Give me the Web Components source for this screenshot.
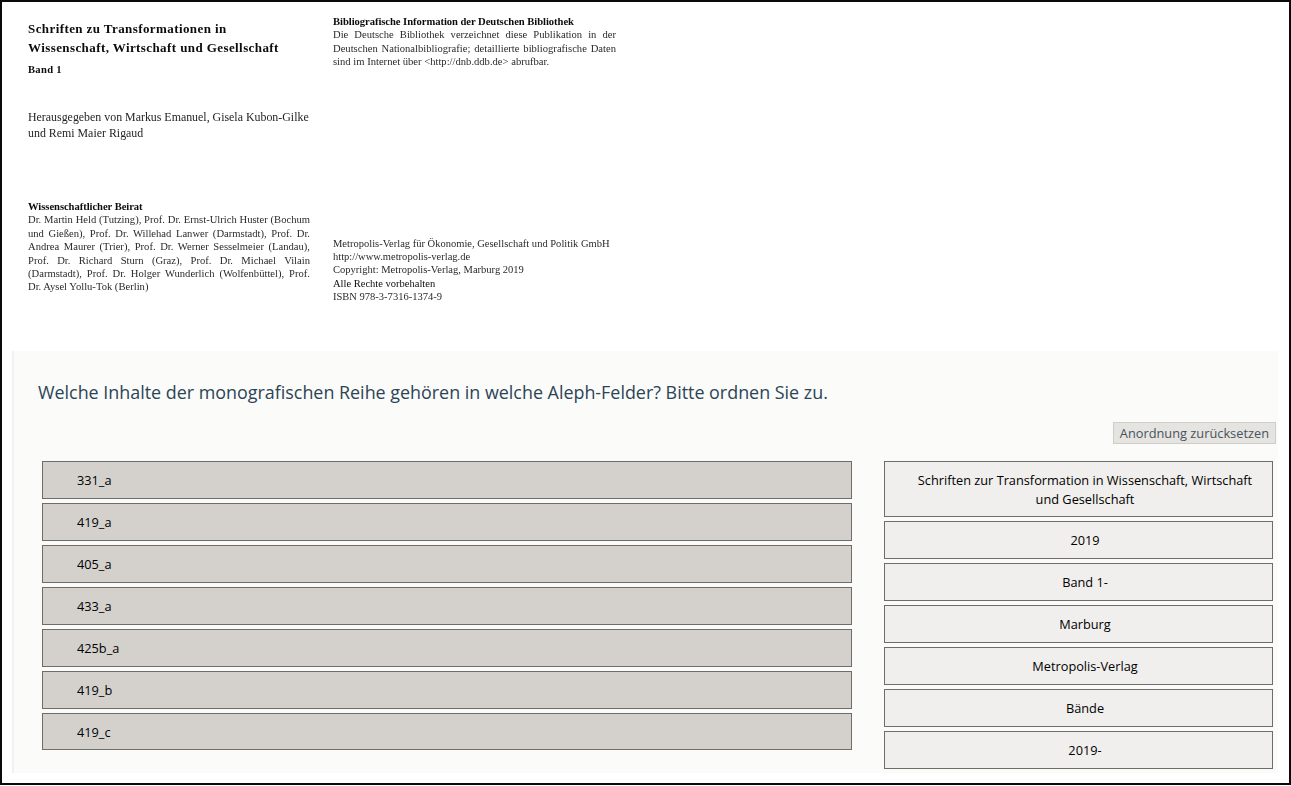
<!DOCTYPE html>
<html lang="de"><head><meta charset="utf-8"><title>Zuordnung</title>
<style>html,body{margin:0;background:#fff}</style></head>
<body>
<quiz-page></quiz-page>
<script>
function comp(name, css, html){
  customElements.define(name, class extends HTMLElement{
    constructor(){super();const s=this.attachShadow({mode:'open'});s.innerHTML='<style>'+css+'</style>'+html;}
  });
}
comp('doc-sheet',`
  :host{display:grid;grid-template-columns:282px 283px;column-gap:23px;padding:0 0 0 26px;height:349px;box-sizing:border-box;
    font-family:"Liberation Serif",serif;font-size:10.6px;line-height:13.4px;color:#2c2a28;filter:blur(.4px)}
  .col{display:flex;flex-direction:column}
  b{color:#0c0c0c;letter-spacing:-.05px}
  .h{font-weight:bold;font-size:13px;line-height:18.5px;color:#0c0c0c;letter-spacing:.41px;margin-top:18px}
  .band{font-weight:bold;font-size:10.6px;color:#0c0c0c;letter-spacing:.3px;margin-top:6px;line-height:14px}
  .ed{font-size:11.9px;line-height:15.5px;margin-top:33px;color:#262422;white-space:nowrap}
  .beirat{margin-top:59px}
  .j{text-align:justify}
  .top{margin-top:13px}
  .imp{margin-top:168px;font-size:10.52px}
  .imp div{white-space:nowrap}
  .imp b{font-weight:normal;letter-spacing:0}
`,`
  <div class="col">
    <div class="h">Schriften zu Transformationen in<br>Wissenschaft, Wirtschaft und Gesellschaft</div>
    <div class="band">Band 1</div>
    <div class="ed">Herausgegeben von Markus Emanuel, Gisela Kubon-Gilke<br>und Remi Maier Rigaud</div>
    <div class="beirat j"><b>Wissenschaftlicher Beirat</b><br>Dr. Martin Held (Tutzing), Prof. Dr. Ernst-Ulrich Huster (Bochum und Gießen), Prof. Dr. Willehad Lanwer (Darmstadt), Prof. Dr. Andrea Maurer (Trier), Prof. Dr. Werner Sesselmeier (Landau), Prof. Dr. Richard Sturn (Graz), Prof. Dr. Michael Vilain (Darmstadt), Prof. Dr. Holger Wunderlich (Wolfenbüttel), Prof. Dr. Aysel Yollu-Tok (Berlin)</div>
  </div>
  <div class="col">
    <div class="top j"><b>Bibliografische Information der Deutschen Bibliothek</b><br>Die Deutsche Bibliothek verzeichnet diese Publikation in der Deutschen Nationalbibliografie; detaillierte bibliografische Daten sind im Internet über &lt;http://dnb.ddb.de&gt; abrufbar.</div>
    <div class="imp"><div>Metropolis-Verlag für Ökonomie, Gesellschaft und Politik GmbH</div><div>http://www.metropolis-verlag.de</div><div>Copyright: Metropolis-Verlag, Marburg 2019</div><div><b>Alle Rechte vorbehalten</b></div><div>ISBN 978-3-7316-1374-9</div></div>
  </div>
`);
comp('match-item',`
  :host{display:flex;align-items:center;box-sizing:border-box;min-height:38px;border:1px solid #6e6d69;padding:8px 17px 8px 30px;
    justify-content:center;text-align:center;background:#f0efed;color:#000;font:12.75px/19px "Open Sans",sans-serif}
  :host([kind=field]){background:#d4d1cd;justify-content:flex-start;text-align:left;padding-left:34px}
  :host([kind=field]:last-child){min-height:37px;padding-top:9px;padding-bottom:7px}
  :host(:not([kind]):first-child){padding-top:9px;padding-bottom:7px}
`,`<span><slot></slot></span>`);
comp('match-list',`:host{display:flex;flex-direction:column;gap:4px}`,`<slot></slot>`);
comp('reset-button',`
  :host{display:block;box-sizing:border-box;height:22px;padding:0 6px;border:1px solid #cfcdc8;background:#e6e4e0;color:#47535d;
    font:12.8px/20px "Open Sans",sans-serif;white-space:nowrap}
`,`<slot></slot>`);
comp('quiz-panel',`
  :host{display:block;box-sizing:border-box;height:422px;margin:0 11px 0 10px;background:#fbfbf9;border-left:2px solid #f1f1ef;padding:29px 2px 0 24px;color:#2b4456;font-family:"Open Sans",sans-serif}
  h2{margin:0;font-weight:400;font-size:17.9px;line-height:25px}
  .bar{display:flex;justify-content:flex-end;margin-top:17px}
  .cols{display:grid;grid-template-columns:810px 389px;column-gap:32px;margin:17px 3px 0 4px}
`,`
  <h2><slot name="q"></slot></h2>
  <div class="bar"><slot name="btn"></slot></div>
  <div class="cols"><slot name="left"></slot><slot name="right"></slot></div>
`);
comp('quiz-page',`
  :host{display:block;box-sizing:border-box;width:1291px;height:785px;border:2px solid #0a0a0a;background:#fff;overflow:hidden}
`,`<slot></slot>`);
const f=['331_a','419_a','405_a','433_a','425b_a','419_b','419_c'];
const v=['Schriften zur Transformation in Wissenschaft, Wirtschaft und Gesellschaft','2019','Band 1-','Marburg','Metropolis-Verlag','Bände','2019-'];
document.querySelector('quiz-page').innerHTML=`<doc-sheet></doc-sheet>
<quiz-panel>
  <span slot="q">Welche Inhalte der monografischen Reihe gehören in welche Aleph-Felder? Bitte ordnen Sie zu.</span>
  <reset-button slot="btn">Anordnung zurücksetzen</reset-button>
  <match-list slot="left">${f.map(x=>`<match-item kind="field">${x}</match-item>`).join('')}</match-list>
  <match-list slot="right">${v.map(x=>`<match-item>${x}</match-item>`).join('')}</match-list>
</quiz-panel>`;
</script>
</body></html>
